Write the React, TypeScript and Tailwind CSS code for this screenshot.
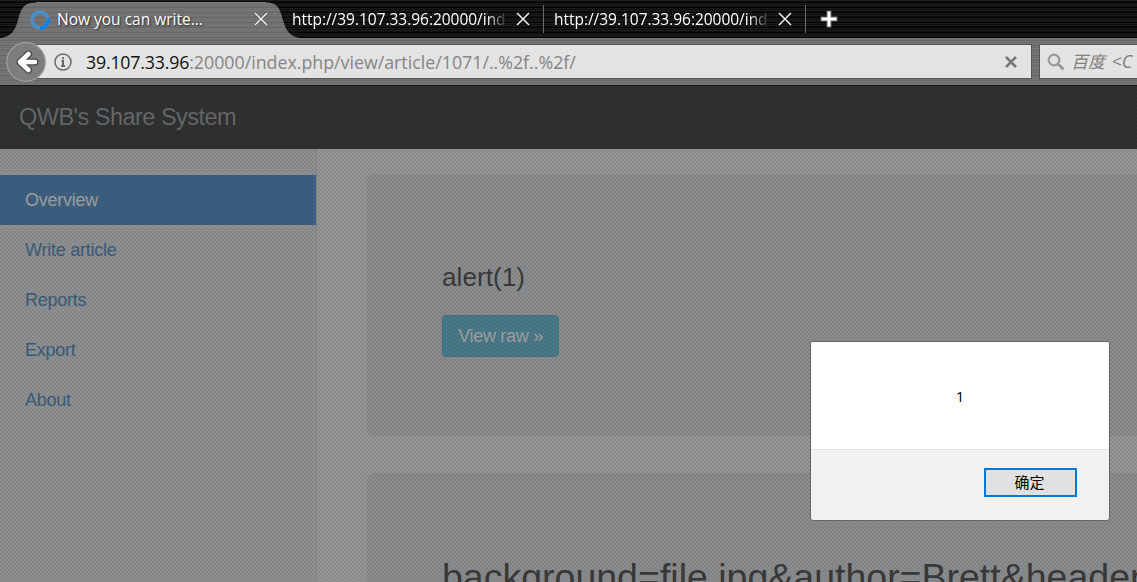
import React from "react";

const stripesDark =
  "bg-[repeating-linear-gradient(180deg,#1d1d1d_0px,#1d1d1d_1px,#0f0f0f_1px,#0f0f0f_2px,#020202_2px,#020202_3px,#191919_3px,#191919_4px,#0f0f0f_4px,#0f0f0f_5px)]";
const stripesGray =
  "bg-[repeating-linear-gradient(180deg,#777_0px,#777_1px,#707070_1px,#707070_2px,#686868_2px,#686868_3px,#757575_3px,#757575_4px,#6e6e6e_4px,#6e6e6e_5px)]";
const uiFont = "font-['Open_Sans','Noto_Sans_CJK_SC',sans-serif]";
const pageFont = "font-['Liberation_Sans',sans-serif]";

function CloseIcon() {
  return (
    <svg width="14" height="14" viewBox="0 0 14 14" className="shrink-0">
      <path d="M1 1L13 13M13 1L1 13" stroke="#000" strokeOpacity="0.3" strokeWidth="2.6" />
      <path d="M1 1L13 13M13 1L1 13" stroke="#f2f2f2" strokeWidth="1.5" />
    </svg>
  );
}

function ActiveTab() {
  return (
    <div className="relative h-[38px] w-[292px] shrink-0">
      <svg width="302" height="38" viewBox="0 0 302 38" className="absolute left-0 top-0">
        <defs>
          <pattern id="tabStripes" width="5" height="5" patternUnits="userSpaceOnUse">
            <rect width="5" height="5" fill="#707070" />
            <rect width="5" height="1" fill="#777" />
            <rect y="2" width="5" height="1" fill="#686868" />
            <rect y="3" width="5" height="1" fill="#757575" />
          </pattern>
        </defs>
        <path
          d="M0 38C11 37 15 31 18 20C21 8 24 2.500 36 2.500H266C278 2.500 280 9 283 20C286 31 290 37 301 38Z"
          fill="url(#tabStripes)"
        />
        <path d="M36 2.500H266" stroke="#7c7c7c" />
      </svg>
      <div className="relative flex h-[38px] items-center pl-[30px]">
        <svg width="20" height="20" viewBox="0 0 20 20" className="mt-[2px] shrink-0">
          <circle cx="10" cy="10" r="8" fill="none" stroke="#4c8fc6" strokeWidth="3.600" />
          <path d="M17.900 8.500A8 8 0 0 1 10 18" fill="none" stroke="#0a84f5" strokeWidth="3.600" />
        </svg>
        <span className="ml-[7px] w-[197px] whitespace-nowrap text-[15.500px] leading-5 text-white [text-shadow:1px_1px_2px_#222]">
          Now you can write...
        </span>
        <CloseIcon />
      </div>
    </div>
  );
}

function BackgroundTab() {
  return (
    <>
      <div className="w-[214px] shrink-0 whitespace-nowrap text-[15.500px] leading-6 tracking-[-0.03px] text-white [mask-image:linear-gradient(90deg,#000_195px,transparent_216px)]">
        http://39.107.33.96:20000/ind
      </div>
      <span className="ml-[10px] flex">
        <CloseIcon />
      </span>
      <span className="ml-[13px] mr-[10px] h-7 w-px shrink-0 bg-[#6b6b6b]" />
    </>
  );
}

function TabStrip() {
  return (
    <div className={`flex h-[38px] items-center overflow-hidden ${stripesDark}`}>
      <ActiveTab />
      <BackgroundTab />
      <BackgroundTab />
      <svg width="20" height="20" viewBox="0 0 20 20" className="ml-[3px] shrink-0">
        <path d="M10 1.500V18.500M1.500 10H18.500" stroke="#666" strokeWidth="5" />
        <path d="M10 2.500V17.500M2.500 10H17.500" stroke="#fff" strokeWidth="3" />
      </svg>
    </div>
  );
}

function Toolbar() {
  return (
    <div className={`flex h-[47px] items-center overflow-hidden pl-[6px] ${stripesGray}`}>
      <svg width="40" height="40" viewBox="0 0 40 40" className="relative z-10 shrink-0">
        <circle cx="20" cy="20" r="19.300" fill="#7d7d7d" stroke="#a0a0a0" strokeWidth="1.200" />
        <path d="M29 20H14M22.500 12L14 20L22.500 28" fill="none" stroke="#484848" strokeWidth="7.200" strokeLinejoin="round" strokeLinecap="round" />
        <path d="M29 20H14M22.500 12L14 20L22.500 28" fill="none" stroke="#fff" strokeWidth="4.600" strokeLinejoin="round" strokeLinecap="round" />
      </svg>
      <div className="-ml-[12px] flex h-[35px] w-[998px] shrink-0 items-center border border-[#555] bg-[#e3e3e3] pl-[19px]">
        <svg width="18" height="18" viewBox="0 0 18 18" className="shrink-0">
          <circle cx="9" cy="9" r="8" fill="none" stroke="#6a6a6a" strokeWidth="1.500" />
          <path d="M9 4.300V6.200M7.500 8H9V13M7 13H11" fill="none" stroke="#666" strokeWidth="2" />
        </svg>
        <span className="ml-[14px] grow whitespace-nowrap text-[17.800px] leading-6 text-[#858585]">
          <span className="tracking-[-0.2px] text-[#111]">39.107.33.96</span>:20000/index.php/view/article/1071/..%2f..%2f/
        </span>
        <svg width="14" height="14" viewBox="0 0 14 14" className="mr-[13px] shrink-0">
          <path d="M2 2L12 12M12 2L2 12" stroke="#777" strokeWidth="2.600" />
        </svg>
      </div>
      <div className="ml-[7px] flex h-[35px] w-[140px] shrink-0 items-center border border-[#555] bg-[#e3e3e3] pl-[7px]">
        <svg width="18" height="18" viewBox="0 0 18 18" className="shrink-0">
          <circle cx="7" cy="7" r="5.300" fill="none" stroke="#999" strokeWidth="2.200" />
          <path d="M11 11L16.500 16.500" stroke="#999" strokeWidth="3" />
        </svg>
        <span className="ml-[6px] whitespace-nowrap text-[17px] italic leading-6 text-[#808080]">
          百度&nbsp;<span className="ml-[2px] text-[18px]">&lt;C</span>
        </span>
      </div>
    </div>
  );
}

function Sidebar() {
  const items = ["Write article", "Reports", "Export", "About"];
  return (
    <nav className="w-[317px] shrink-0 border-r border-[#868788] bg-[#8e8f90] pt-[26px] text-[18px] tracking-[-0.25px] text-[#3b5c7d]">
      <div className="flex h-[50px] items-center bg-[#3e6182] pl-[25px] text-[#a0a2a3]">Overview</div>
      {items.map((item) => (
        <div key={item} className="flex h-[50px] items-center pl-[25px]">
          {item}
        </div>
      ))}
    </nav>
  );
}

function AlertDialog() {
  return (
    <div
      className={`absolute left-[810px] top-[341px] flex h-[180px] w-[300px] flex-col overflow-hidden rounded-[3px] border border-[#666] bg-[#f1f1f1] text-[15px] text-black ${uiFont}`}
    >
      <div className="flex h-[108px] items-center justify-center border-b border-[#e2e2e2] bg-white pt-[2px]">1</div>
      <div className="flex grow justify-end pr-8 pt-[18px]">
        <button className="flex h-[29px] w-[93px] items-center justify-center border-2 border-[#0078d7] bg-[#e1e1e1] pb-[2px] pr-[2px] leading-5 font-['Noto_Sans_CJK_SC',sans-serif]">
          确定
        </button>
      </div>
    </div>
  );
}

export default function App() {
  return (
    <div className="relative flex h-[582px] w-[1137px] flex-col overflow-hidden">
      <div className={uiFont}>
        <TabStrip />
        <Toolbar />
      </div>
      <div className={`relative flex grow flex-col overflow-hidden ${pageFont}`}>
        <header className="flex h-16 shrink-0 items-center border-t border-[#191919] bg-[#2f3132] pl-[19px] text-[23.500px] tracking-[-0.520px] text-[#68696a]">
          QWB's Share System
        </header>
        <div className="flex min-h-0 grow bg-[#949596]">
          <Sidebar />
          <main className="ml-[50px] min-w-0 grow pt-[25px]">
            <section className="flex h-[262px] flex-col items-start rounded-l-[7px] bg-[#8b8c8d] pl-[75px] pt-[88px]">
              <p className="text-[26.200px] leading-[30px] text-[#3a3a3a]">alert(1)</p>
              <button className="mt-[23px] flex h-[42px] w-[117px] items-center justify-center rounded-[4px] border border-[#427687] bg-[#4a798a] text-[18px] tracking-[-0.3px] text-[#a0a2a3]">
                View raw »
              </button>
            </section>
            <section className="mt-[37px] h-[262px] overflow-hidden whitespace-nowrap rounded-tl-[7px] bg-[#8b8c8d] pl-[75px] pt-[82px] text-[37.500px] leading-[44px] text-[#3a3a3a]">
              background=file.jpg&amp;author=Brett&amp;header
            </section>
          </main>
        </div>
        <div className="pointer-events-none absolute inset-0 bg-[radial-gradient(circle_at_1px_1px,rgba(0,0,0,0.07)_0px,rgba(0,0,0,0.07)_0.800px,transparent_0.900px),radial-gradient(circle_at_3px_3px,rgba(0,0,0,0.07)_0px,rgba(0,0,0,0.07)_0.800px,transparent_0.900px)] bg-[size:4px_4px]" />
      </div>
      <AlertDialog />
    </div>
  );
}
